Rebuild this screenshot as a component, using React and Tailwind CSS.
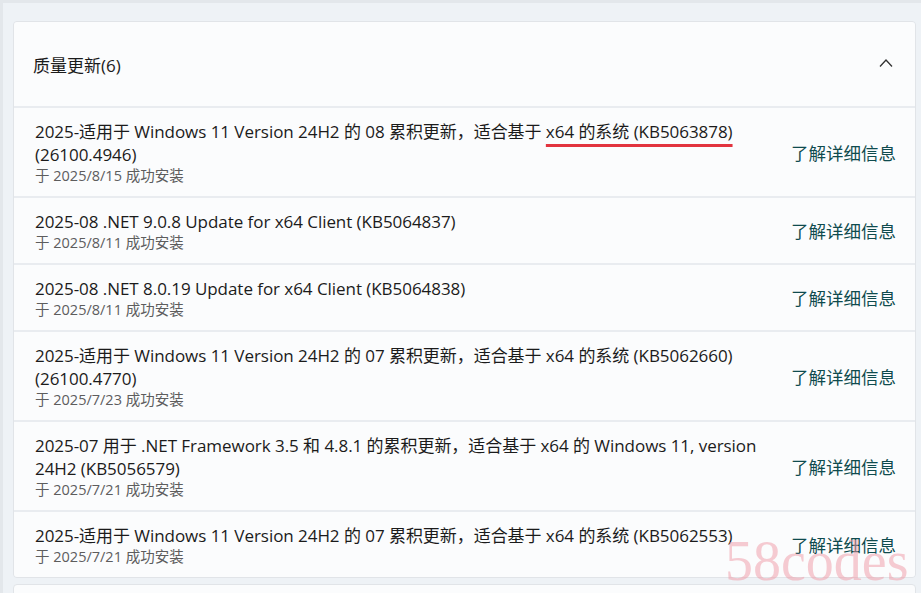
import React from "react";

const rows = [
  {
    title: (
      <>
        2025-适用于 Windows 11 Version 24H2 的 08 累积更新，适合基于{" "}
        <span className="underline decoration-[#e2343f] decoration-[3px] underline-offset-[6px]">
          x64 的系统 (KB5063878)
        </span>
        <br />
        (26100.4946)
      </>
    ),
    date: "于 2025/8/15 成功安装",
  },
  { title: "2025-08 .NET 9.0.8 Update for x64 Client (KB5064837)", date: "于 2025/8/11 成功安装" },
  { title: "2025-08 .NET 8.0.19 Update for x64 Client (KB5064838)", date: "于 2025/8/11 成功安装" },
  {
    title: (
      <>
        2025-适用于 Windows 11 Version 24H2 的 07 累积更新，适合基于 x64 的系统 (KB5062660)
        <br />
        (26100.4770)
      </>
    ),
    date: "于 2025/7/23 成功安装",
  },
  {
    title: (
      <>
        2025-07 用于 .NET Framework 3.5 和 4.8.1 的累积更新，适合基于 x64 的 Windows 11, version
        <br />
        24H2 (KB5056579)
      </>
    ),
    date: "于 2025/7/21 成功安装",
  },
  {
    title: "2025-适用于 Windows 11 Version 24H2 的 07 累积更新，适合基于 x64 的系统 (KB5062553)",
    date: "于 2025/7/21 成功安装",
  },
];

export default function App() {
  return (
    <div
      className="relative w-[921px] h-[593px] overflow-hidden bg-[#eef2f6] border-l-[3px] border-t-[3px] border-[#e3e7eb] pl-[10px] pt-[18px]"
      style={{ fontFamily: '"Open Sans", "Noto Sans CJK SC", sans-serif' }}
    >
      <div className="w-[903px] rounded-[4px] border border-[#e1e4e8] bg-[#e9ecf0] flex flex-col gap-[2px] overflow-hidden">
        <div className="h-[84px] bg-[#fbfcfd] flex items-center justify-between pl-[19px] pr-[22px]">
          <span className="text-[17px] text-[#1b1b1b] mt-[4px]">质量更新(6)</span>
          <svg width="14" height="10" viewBox="0 0 14 10" className="mt-[-2px]">
            <polyline points="1,8.5 7,2 13,8.5" fill="none" stroke="#333" strokeWidth="1.3" />
          </svg>
        </div>
        {rows.map((r, i) => (
          <div key={i} className="bg-[#fbfcfd] flex items-center justify-between pl-[21px] pr-[19px] pt-[12px] pb-[10px]">
            <div className="flex flex-col">
              <div className="text-[17px] leading-[23px] text-[#1b1b1b] tracking-[-0.05px]">{r.title}</div>
              <div className="text-[14.5px] leading-[20px] text-[#5d5d5d]">{r.date}</div>
            </div>
            <span className="text-[17.5px] text-[#0f4b4e] whitespace-nowrap">了解详细信息</span>
          </div>
        ))}
      </div>
      <div className="mt-[6px] w-[903px] h-[20px] rounded-[4px] border border-[#e1e4e8] bg-[#fbfcfd]" />
      <div
        className="absolute left-[722px] top-[530px] text-[56px] leading-none text-[#f09aa6] opacity-50 pointer-events-none"
        style={{ fontFamily: '"Liberation Serif", serif' }}
      >
        58codes
      </div>
    </div>
  );
}
